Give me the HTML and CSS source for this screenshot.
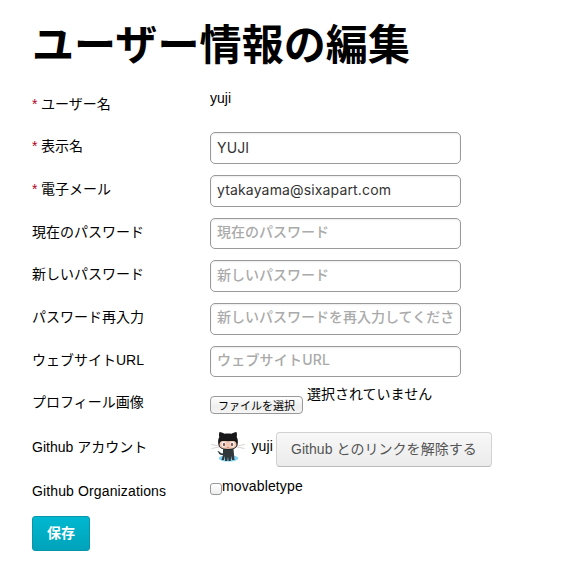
FILE: index.html
```html
<!DOCTYPE html>
<html lang="ja">
<head>
<meta charset="utf-8">
<title>ユーザー情報の編集</title>
<link rel="stylesheet" href="styles.css">
</head>
<body>
<h1>ユーザー情報の編集</h1>
<form>
  <div class="row first-row"><label><span class="required">*</span>ユーザー名</label><div class="value name">yuji</div></div>
  <div class="row"><label for="display"><span class="required">*</span>表示名</label><input class="field" id="display" type="text" value="YUJI"></div>
  <div class="row"><label for="email"><span class="required">*</span>電子メール</label><input class="field" id="email" type="text" value="ytakayama@sixapart.com"></div>
  <div class="row"><label for="current">現在のパスワード</label><input class="field" id="current" type="password" placeholder="現在のパスワード"></div>
  <div class="row"><label for="new">新しいパスワード</label><input class="field" id="new" type="password" placeholder="新しいパスワード"></div>
  <div class="row"><label for="confirm">パスワード再入力</label><input class="field" id="confirm" type="password" placeholder="新しいパスワードを再入力してください"></div>
  <div class="row"><label for="url">ウェブサイトURL</label><input class="field url" id="url" type="text" placeholder="ウェブサイトURL"></div>
  <div class="row file-row"><label>プロフィール画像</label><div class="value file"><button class="choose" type="button">ファイルを選択</button><span>選択されていません</span></div></div>
  <div class="row github-row"><label>Github アカウント</label>
    <div class="value github">
      <svg class="avatar" viewBox="0 0 36 32" width="36" height="32">
        <ellipse cx="18.5" cy="26.300" rx="9.800" ry="3.300" fill="#85d3f3"/>
        <path d="M1 12.500 9 14M1.500 16.500 9 15M27 14l8-1.500M27 15l7.500 1.500" stroke="#d5d0cd" stroke-width=".9" fill="none"/>
        <path d="M13 17h10.500l1 11h-2.500l-.7-4-.6 5h-2.200l-.5-4-.7 4h-2.200l-.3-5-1 4h-2.300l1.500-5c-3 .5-4-1-4.500-2.500-.4-1-1.200-1.500-1.200-1.500 3-.5 2.500 3 5.700 2.300z" fill="#30383c"/>
        <path d="M9.500 0c2 0 4 1.200 5 1.800 2-.5 5-.5 7 0 1-.7 3-1.800 5-1.800.7 2 .5 4 .2 5 1.400 2 1.400 5.500.8 8-1 3.800-4.500 4.500-9.500 4.500s-8.500-.7-9.500-4.500c-.6-2.500-.6-6 .8-8-.4-1-.5-3 .2-5z" fill="#171719"/>
        <path d="M10 10.500c1.300-2.200 4.300-1.300 8-1.300s6.700-.9 8 1.300c1.500 3.200-.2 6.500-8 6.500s-9.500-3.300-8-6.500z" fill="#f2c9b7"/>
        <ellipse cx="13.700" cy="12.300" rx="2" ry="2.600" fill="#fff"/><ellipse cx="22.300" cy="12.300" rx="2" ry="2.600" fill="#fff"/>
        <ellipse cx="14" cy="12.500" rx="1.200" ry="1.700" fill="#8e554c"/><ellipse cx="22" cy="12.500" rx="1.200" ry="1.700" fill="#8e554c"/>
        <path d="M17 15.600q1 .6 2 0" stroke="#a44f45" stroke-width=".6" fill="none"/>
      </svg>
      <span class="account">yuji</span>
      <button class="unlink" type="button">Github とのリンクを解除する</button>
    </div>
  </div>
  <div class="row org-row"><label class="latin">Github Organizations</label><div class="value org"><input class="check" id="org" type="checkbox"><label class="org-name latin" for="org">movabletype</label></div></div>
  <button class="save" type="button">保存</button>
</form>
</body>
</html>
```
FILE: styles.css
```css
* { box-sizing: border-box; }
body {
  margin: 0;
  padding: 17px 32px 0;
  background: #fff;
  color: #000;
  font: 14px/20px "Liberation Sans", "Noto Sans CJK JP", sans-serif;
}
h1 {
  margin: 0 0 22.25px;
  font: bold 42px/50px "Noto Sans CJK JP", sans-serif;
  letter-spacing: .1px;
  white-space: nowrap;
}
.row {
  display: grid;
  grid-template-columns: 178px 1fr;
  align-items: start;
  height: 42.75px;
}
.row > label { padding-top: 4.2px; white-space: nowrap; }
.first-row > label { padding-top: 5px; }
.required { display: inline-block; width: 9px; color: #b00020; }
.latin { letter-spacing: .13px; }
.name { margin-top: -1px; }
.field {
  width: 251px;
  height: 32px;
  margin: 0;
  padding: 0 6px 2px;
  border: 1px solid #999;
  border-radius: 5px;
  background: #fff;
  box-shadow: inset 0 1px 2px rgba(0, 0, 0, .08);
  color: #333;
  font: 14px "Inter", "Noto Sans CJK JP", sans-serif;
  letter-spacing: .15px;
}
.field::placeholder { color: #aaa; opacity: 1; font-weight: 500; letter-spacing: 0; }
.field[type="password"], .url { height: 31.5px; padding-bottom: 4px; }
.url::placeholder { letter-spacing: .2px; }
.file-row { height: 43.5px; }
.file-row > label { padding-top: 3px; }
.file { display: flex; gap: 4px; margin-top: -5px; }
.choose {
  width: 93px;
  height: 18px;
  margin: 12.500px 0 0;
  padding: 0;
  border: 1px solid #999;
  border-radius: 4px;
  background: linear-gradient(#fff, #eee 60%, #f5f5f5);
  color: #000;
  font: 11px/15px "Noto Sans CJK JP", sans-serif;
}
.github-row { height: 44px; }
.github-row > label { padding-top: 5px; }
.github { display: flex; white-space: nowrap; }
.avatar { display: block; }
.account { margin: 4px 3px 0 5.5px; letter-spacing: .1px; }
.unlink {
  width: 216px;
  height: 35px;
  padding: 0 0 2px;
  border: 1px solid #d2d2d2;
  border-bottom-color: #bbb;
  border-radius: 4px;
  background: linear-gradient(#f8f8f8, #ebebeb);
  color: #555;
  font: 14px/20px "Liberation Sans", "Noto Sans CJK JP", sans-serif;
  letter-spacing: .05px;
}
.org-row { height: 40px; }
.org-row > label { padding-top: 5px; }
.org { display: flex; }
.check {
  appearance: none;
  width: 12px;
  height: 12px;
  margin: 7px 0 0;
  border: 1px solid #999;
  border-radius: 3px;
  background: linear-gradient(#fff, #eee);
}
.save {
  display: block;
  width: 58px;
  height: 35px;
  padding: 0 0 4px;
  border: 1px solid #0795aa;
  border-radius: 3px;
  background: linear-gradient(#00b8d0, #00a3ba);
  color: #fff;
  font: bold 14px/20px "Noto Sans CJK JP", sans-serif;
}
```
